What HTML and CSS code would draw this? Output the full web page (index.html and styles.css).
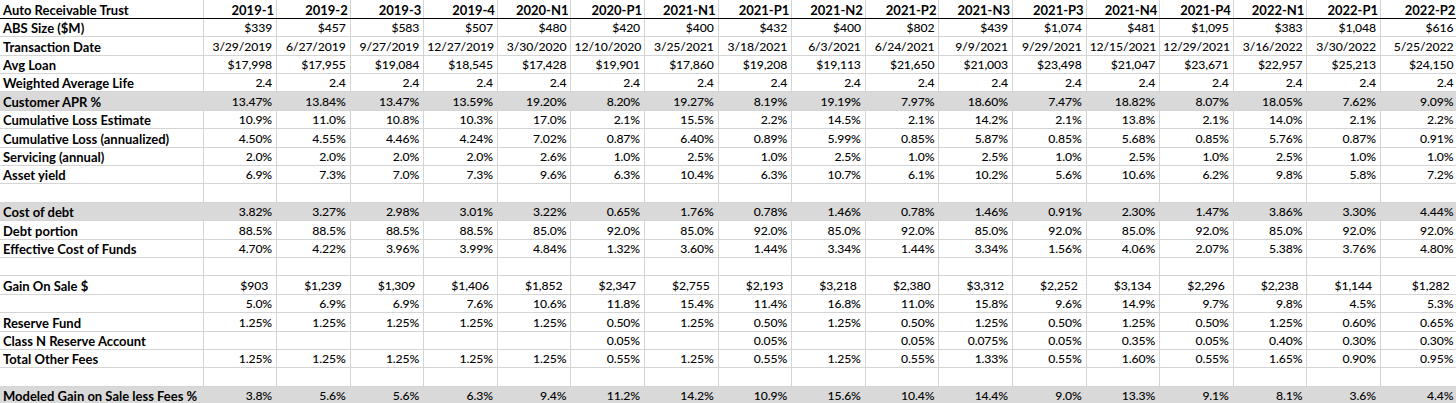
FILE: index.html
```html
<!DOCTYPE html>
<html lang="en">
<head>
<meta charset="utf-8">
<title>Auto Receivable Trust</title>
<link rel="stylesheet" href="styles.css">
</head>
<body>
<table class="sheet">
<colgroup>
<col class="c-label">
<col class="c-data"><col class="c-data"><col class="c-data"><col class="c-data"><col class="c-data"><col class="c-data"><col class="c-data"><col class="c-data"><col class="c-data"><col class="c-data"><col class="c-data"><col class="c-data"><col class="c-data"><col class="c-data"><col class="c-data"><col class="c-data"><col class="c-last">
</colgroup>
<thead>
<tr class="head"><th>Auto Receivable Trust</th><th>2019-1</th><th>2019-2</th><th>2019-3</th><th>2019-4</th><th>2020-N1</th><th>2020-P1</th><th>2021-N1</th><th>2021-P1</th><th>2021-N2</th><th>2021-P2</th><th>2021-N3</th><th>2021-P3</th><th>2021-N4</th><th>2021-P4</th><th>2022-N1</th><th>2022-P1</th><th>2022-P2</th></tr>
</thead>
<tbody>
<tr><th>ABS Size ($M)</th><td>$339</td><td>$457</td><td>$583</td><td>$507</td><td>$480</td><td>$420</td><td>$400</td><td>$432</td><td>$400</td><td>$802</td><td>$439</td><td>$1,074</td><td>$481</td><td>$1,095</td><td>$383</td><td>$1,048</td><td>$616</td></tr>
<tr><th>Transaction Date</th><td>3/29/2019</td><td>6/27/2019</td><td>9/27/2019</td><td>12/27/2019</td><td>3/30/2020</td><td>12/10/2020</td><td>3/25/2021</td><td>3/18/2021</td><td>6/3/2021</td><td>6/24/2021</td><td>9/9/2021</td><td>9/29/2021</td><td>12/15/2021</td><td>12/29/2021</td><td>3/16/2022</td><td>3/30/2022</td><td>5/25/2022</td></tr>
<tr><th>Avg Loan</th><td>$17,998</td><td>$17,955</td><td>$19,084</td><td>$18,545</td><td>$17,428</td><td>$19,901</td><td>$17,860</td><td>$19,208</td><td>$19,113</td><td>$21,650</td><td>$21,003</td><td>$23,498</td><td>$21,047</td><td>$23,671</td><td>$22,957</td><td>$25,213</td><td>$24,150</td></tr>
<tr><th>Weighted Average Life</th><td>2.4</td><td>2.4</td><td>2.4</td><td>2.4</td><td>2.4</td><td>2.4</td><td>2.4</td><td>2.4</td><td>2.4</td><td>2.4</td><td>2.4</td><td>2.4</td><td>2.4</td><td>2.4</td><td>2.4</td><td>2.4</td><td>2.4</td></tr>
<tr class="shade"><th>Customer APR %</th><td>13.47%</td><td>13.84%</td><td>13.47%</td><td>13.59%</td><td>19.20%</td><td>8.20%</td><td>19.27%</td><td>8.19%</td><td>19.19%</td><td>7.97%</td><td>18.60%</td><td>7.47%</td><td>18.82%</td><td>8.07%</td><td>18.05%</td><td>7.62%</td><td>9.09%</td></tr>
<tr><th>Cumulative Loss Estimate</th><td>10.9%</td><td>11.0%</td><td>10.8%</td><td>10.3%</td><td>17.0%</td><td>2.1%</td><td>15.5%</td><td>2.2%</td><td>14.5%</td><td>2.1%</td><td>14.2%</td><td>2.1%</td><td>13.8%</td><td>2.1%</td><td>14.0%</td><td>2.1%</td><td>2.2%</td></tr>
<tr><th>Cumulative Loss (annualized)</th><td>4.50%</td><td>4.55%</td><td>4.46%</td><td>4.24%</td><td>7.02%</td><td>0.87%</td><td>6.40%</td><td>0.89%</td><td>5.99%</td><td>0.85%</td><td>5.87%</td><td>0.85%</td><td>5.68%</td><td>0.85%</td><td>5.76%</td><td>0.87%</td><td>0.91%</td></tr>
<tr><th>Servicing (annual)</th><td>2.0%</td><td>2.0%</td><td>2.0%</td><td>2.0%</td><td>2.6%</td><td>1.0%</td><td>2.5%</td><td>1.0%</td><td>2.5%</td><td>1.0%</td><td>2.5%</td><td>1.0%</td><td>2.5%</td><td>1.0%</td><td>2.5%</td><td>1.0%</td><td>1.0%</td></tr>
<tr><th>Asset yield</th><td>6.9%</td><td>7.3%</td><td>7.0%</td><td>7.3%</td><td>9.6%</td><td>6.3%</td><td>10.4%</td><td>6.3%</td><td>10.7%</td><td>6.1%</td><td>10.2%</td><td>5.6%</td><td>10.6%</td><td>6.2%</td><td>9.8%</td><td>5.8%</td><td>7.2%</td></tr>
<tr><th></th><td></td><td></td><td></td><td></td><td></td><td></td><td></td><td></td><td></td><td></td><td></td><td></td><td></td><td></td><td></td><td></td><td></td></tr>
<tr class="shade"><th>Cost of debt</th><td>3.82%</td><td>3.27%</td><td>2.98%</td><td>3.01%</td><td>3.22%</td><td>0.65%</td><td>1.76%</td><td>0.78%</td><td>1.46%</td><td>0.78%</td><td>1.46%</td><td>0.91%</td><td>2.30%</td><td>1.47%</td><td>3.86%</td><td>3.30%</td><td>4.44%</td></tr>
<tr><th>Debt portion</th><td>88.5%</td><td>88.5%</td><td>88.5%</td><td>88.5%</td><td>85.0%</td><td>92.0%</td><td>85.0%</td><td>92.0%</td><td>85.0%</td><td>92.0%</td><td>85.0%</td><td>92.0%</td><td>85.0%</td><td>92.0%</td><td>85.0%</td><td>92.0%</td><td>92.0%</td></tr>
<tr><th>Effective Cost of Funds</th><td>4.70%</td><td>4.22%</td><td>3.96%</td><td>3.99%</td><td>4.84%</td><td>1.32%</td><td>3.60%</td><td>1.44%</td><td>3.34%</td><td>1.44%</td><td>3.34%</td><td>1.56%</td><td>4.06%</td><td>2.07%</td><td>5.38%</td><td>3.76%</td><td>4.80%</td></tr>
<tr><th></th><td></td><td></td><td></td><td></td><td></td><td></td><td></td><td></td><td></td><td></td><td></td><td></td><td></td><td></td><td></td><td></td><td></td></tr>
<tr class="money"><th>Gain On Sale $</th><td>$903</td><td>$1,239</td><td>$1,309</td><td>$1,406</td><td>$1,852</td><td>$2,347</td><td>$2,755</td><td>$2,193</td><td>$3,218</td><td>$2,380</td><td>$3,312</td><td>$2,252</td><td>$3,134</td><td>$2,296</td><td>$2,238</td><td>$1,144</td><td>$1,282</td></tr>
<tr><th></th><td>5.0%</td><td>6.9%</td><td>6.9%</td><td>7.6%</td><td>10.6%</td><td>11.8%</td><td>15.4%</td><td>11.4%</td><td>16.8%</td><td>11.0%</td><td>15.8%</td><td>9.6%</td><td>14.9%</td><td>9.7%</td><td>9.8%</td><td>4.5%</td><td>5.3%</td></tr>
<tr><th>Reserve Fund</th><td>1.25%</td><td>1.25%</td><td>1.25%</td><td>1.25%</td><td>1.25%</td><td>0.50%</td><td>1.25%</td><td>0.50%</td><td>1.25%</td><td>0.50%</td><td>1.25%</td><td>0.50%</td><td>1.25%</td><td>0.50%</td><td>1.25%</td><td>0.60%</td><td>0.65%</td></tr>
<tr><th>Class N Reserve Account</th><td></td><td></td><td></td><td></td><td></td><td>0.05%</td><td></td><td>0.05%</td><td></td><td>0.05%</td><td>0.075%</td><td>0.05%</td><td>0.35%</td><td>0.05%</td><td>0.40%</td><td>0.30%</td><td>0.30%</td></tr>
<tr><th>Total Other Fees</th><td>1.25%</td><td>1.25%</td><td>1.25%</td><td>1.25%</td><td>1.25%</td><td>0.55%</td><td>1.25%</td><td>0.55%</td><td>1.25%</td><td>0.55%</td><td>1.33%</td><td>0.55%</td><td>1.60%</td><td>0.55%</td><td>1.65%</td><td>0.90%</td><td>0.95%</td></tr>
<tr><th></th><td></td><td></td><td></td><td></td><td></td><td></td><td></td><td></td><td></td><td></td><td></td><td></td><td></td><td></td><td></td><td></td><td></td></tr>
<tr class="shade"><th>Modeled Gain on Sale less Fees %</th><td>3.8%</td><td>5.6%</td><td>5.6%</td><td>6.3%</td><td>9.4%</td><td>11.2%</td><td>14.2%</td><td>10.9%</td><td>15.6%</td><td>10.4%</td><td>14.4%</td><td>9.0%</td><td>13.3%</td><td>9.1%</td><td>8.1%</td><td>3.6%</td><td>4.4%</td></tr>
</tbody>
</table>
</body>
</html>
```
FILE: styles.css
```css
html, body {
  margin: 0;
  padding: 0;
  background: #ffffff;
  overflow: hidden;
}

.sheet {
  border-collapse: collapse;
  table-layout: fixed;
  width: 1458px;
  font-family: Lato, "Liberation Sans", sans-serif;
  font-size: 13px;
  color: #000000;
}

.c-label { width: 203px; }
.c-data { width: 73.6px; }
.c-last { width: 77.4px; }

.sheet tr {
  height: 18.4px;
}

.sheet th,
.sheet td {
  padding: 0 3px;
  border-right: 1px solid #d4d4d4;
  border-bottom: 1px solid #d4d4d4;
  white-space: nowrap;
  overflow: hidden;
  vertical-align: bottom;
  line-height: 16px;
  height: 18.4px;
  box-sizing: border-box;
}

.sheet tbody th {
  text-align: left;
  font-weight: 700;
}

.sheet td {
  text-align: right;
  font-weight: 500;
  font-size: 12.2px;
  letter-spacing: -0.1px;
  padding-right: 4px;
}

.head th {
  font-weight: 700;
  text-align: right;
  border-bottom: 1px solid #000000;
  padding-right: 2px;
}

.head th:first-child {
  text-align: left;
  padding-left: 3px;
}

.shade th,
.shade td {
  background: #d9d9d9;
  border-right-color: #d9d9d9;
}

.money td {
  padding-right: 8px;
}
```
